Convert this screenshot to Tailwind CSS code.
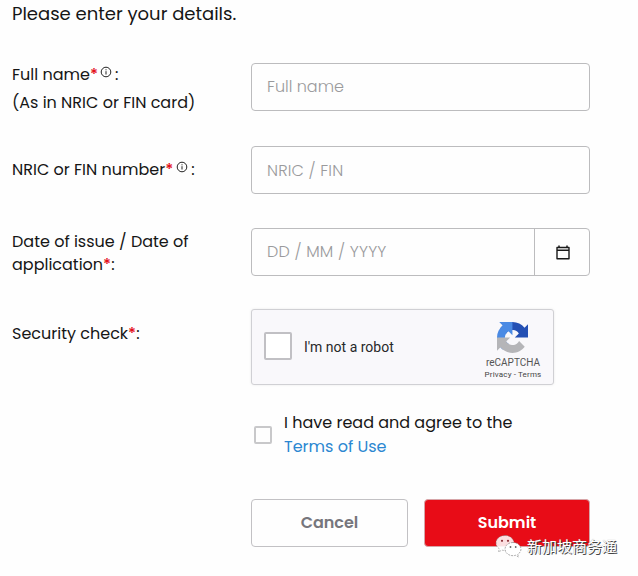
<!DOCTYPE html>
<html lang="en">
<head>
  <meta charset="UTF-8" />
  <meta name="viewport" content="width=device-width, initial-scale=1.0" />
  <title>Enter your details</title>
  <script src="https://cdn.jsdelivr.net/npm/@tailwindcss/browser@4"></script>
</head>
<body class="bg-[#fefefe] text-[#161616] font-['Poppins','Inter',sans-serif] text-base overflow-hidden">

<main class="relative w-[638px] h-[576px] pl-3 pr-12 overflow-hidden">
  <h1 class="h-[63px] text-lg leading-7"><span>Please enter your details.</span></h1>

  <form class="grid grid-cols-[239px_339px]">
    <div class="h-[83px] leading-7 whitespace-nowrap">
      <div class="flex -mt-[2px]">
        <span>Full name</span><span class="text-[#e3101a] font-medium">*</span>
        <svg class="w-3 h-3 mt-[5px] ml-[2px] mr-[3px]" viewBox="0 0 12 12" fill="none" stroke="#222"><circle cx="6" cy="6" r="4.8" stroke-width="1" /><path d="M6 5.2v3.3M6 3.3v1" stroke-width="1" /></svg>
        <span>:</span>
      </div>
      <div><span>(As in NRIC or FIN card)</span></div>
    </div>
    <div class="h-12 border border-[#bcbcbe] rounded px-[15px] leading-[45px] text-[#9a9a9c] font-light"><span>Full name</span></div>

    <div class="h-[82px] leading-[47px] whitespace-nowrap">
      <div class="flex">
        <span>NRIC or FIN number</span><span class="text-[#e3101a] font-medium">*</span>
        <svg class="w-3 h-3 mt-[15px] ml-[3px] mr-[3px]" viewBox="0 0 12 12" fill="none" stroke="#222"><circle cx="6" cy="6" r="4.8" stroke-width="1" /><path d="M6 5.2v3.3M6 3.3v1" stroke-width="1" /></svg>
        <span>:</span>
      </div>
    </div>
    <div class="h-12 border border-[#bcbcbe] rounded px-[15px] leading-[47px] text-[#9a9a9c] font-light tracking-[0.01em]"><span>NRIC / FIN</span></div>

    <div class="h-[81px] leading-[23px] pt-[2px] whitespace-nowrap">
      <div><span>Date of issue / Date of</span></div>
      <div><span>application</span><span class="text-[#e3101a] font-medium">*</span>:</div>
    </div>
    <div class="h-12 flex border border-[#bcbcbe] rounded">
      <div class="flex-1 px-[15px] leading-[46px] text-[#9a9a9c] font-light tracking-[0.01em]"><span>DD / MM / YYYY</span></div>
      <div class="w-[55px] pl-px border-l border-[#bcbcbe] flex items-center justify-center">
        <svg class="w-[14px] h-[15px]" viewBox="0 0 14 15" fill="none" stroke="#1a1a1a"><path d="M1 2.5h12v11.3H1z" stroke-width="1.4" stroke-linejoin="round" /><path d="M1 5.3h12M3 .5v2M11 .5v2" stroke-width="1.5" /></svg>
      </div>
    </div>

    <div class="h-[190px] leading-[49px]"><span>Security check</span><span class="text-[#e3101a] font-medium">*</span>:</div>
    <div>
      <div class="w-[303px] h-[76px] flex items-center bg-[#f9f8fb] border border-[#d0d0d4] rounded-[3px] shadow-[0_0_3px_rgba(0,0,0,0.08)] font-['Roboto',sans-serif]">
        <div class="w-7 h-7 ml-3 -mt-[2px] bg-white border-2 border-[#c1c0c4] rounded-[2px]"></div>
        <div class="ml-3 text-sm text-[#28282a]"><span>I'm not a robot</span></div>
        <div class="ml-auto w-20 pt-[8px] flex flex-col items-center text-[#555]">
          <svg class="w-[31px] h-[31px] -ml-px" viewBox="0 0 64 64">
            <path fill="#2450b4" d="M64 31.955l-.016-1.370V4.687l-7.160 7.160C50.924 4.674 42.033.093 32.071.093c-10.367 0-19.577 4.960-25.417 12.642l11.736 11.860a15.550 15.550 0 0 1 4.754-5.334c2.050-1.600 4.952-2.906 8.968-2.906.485 0 .860.057 1.135.163 4.976.393 9.288 3.140 11.828 7.124l-8.307 8.307L64 31.953" />
            <path fill="#4a8ae4" d="M31.862.094l-1.370.016H4.594l7.160 7.160C4.580 13.124 0 22.015 0 31.977c0 10.367 4.960 19.577 12.642 25.417l11.860-11.736a15.550 15.550 0 0 1-5.334-4.754c-1.600-2.050-2.906-4.952-2.906-8.968 0-.485.057-.860.163-1.135.393-4.976 3.140-9.288 7.124-11.828l8.307 8.307L31.860.096" />
            <path fill="#b5b5b8" d="M.001 32.045l.016 1.370v25.898l7.160-7.160c5.855 7.174 14.746 11.755 24.708 11.755 10.367 0 19.577-4.960 25.417-12.642L45.567 39.406a15.550 15.550 0 0 1-4.754 5.334c-2.050 1.600-4.952 2.906-8.968 2.906-.485 0-.860-.057-1.135-.163-4.976-.393-9.288-3.140-11.828-7.124l8.307-8.307L.001 32.045" />
          </svg>
          <div class="mt-[3px] text-[10px] leading-[13px]"><span>reCAPTCHA</span></div>
          <div class="text-[8px] leading-[12px] tracking-[0.02em] text-[#444]"><span>Privacy - Terms</span></div>
        </div>
      </div>

      <div class="flex mt-[26px] pl-[3px]">
        <div class="w-[18px] h-[18px] mt-[15px] border-2 border-[#c8c8ca] rounded-[2px]"></div>
        <div class="ml-3 leading-6 whitespace-nowrap">
          <div><span>I have read and agree to the</span></div>
          <div class="text-[#2b87d1]"><span>Terms of Use</span></div>
        </div>
      </div>
    </div>

    <div class="col-start-2 flex gap-4 font-semibold leading-[46px] text-center">
      <div class="w-[157px] h-12 border border-[#c2c1c4] rounded text-[#76767c]"><span>Cancel</span></div>
      <div class="w-[166px] h-12 border border-[#d6a5a8] rounded bg-[#e80c17] text-white"><span>Submit</span></div>
    </div>
  </form>

  <!-- account watermark over the submit button -->
  <div class="absolute left-[495px] top-[534px] flex items-center">
    <svg class="w-[27px] h-[25px]" viewBox="0 0 27 25">
      <path d="M10 1.500C5 1.500 1 4.800 1 9c0 2.400 1.300 4.400 3.300 5.800L3.500 18l3.400-1.900c1 .3 2 .4 3.100.4 5 0 9-3.300 9-7.500s-4-7.500-9-7.500z" fill="#fff" fill-opacity=".87" stroke="#777" stroke-width=".5" stroke-dasharray="2 1" />
      <path d="M18 8.500c-4.400 0-8 2.900-8 6.600s3.600 6.600 8 6.600c.9 0 1.800-.1 2.600-.4l2.900 1.700-.7-2.700c1.900-1.200 3.200-3.100 3.200-5.200 0-3.700-3.600-6.600-8-6.600z" fill="#fff" stroke="#777" stroke-width=".6" stroke-dasharray="2 1" />
      <g fill="#8b3036"><circle cx="7" cy="6.800" r="1.100" /><circle cx="13" cy="6.800" r="1.100" /></g>
      <g fill="#666"><circle cx="15.500" cy="13" r=".9" /><circle cx="20.700" cy="13" r=".9" /></g>
    </svg>
    <div class="ml-[5px] -mt-px text-[15px] leading-6 text-white whitespace-nowrap font-['Noto_Sans_CJK_SC',sans-serif] [text-shadow:1px_1px_0_#444,0_0_1px_#999]"><span>新加坡商务通</span></div>
  </div>
</main>

</body>
</html>
